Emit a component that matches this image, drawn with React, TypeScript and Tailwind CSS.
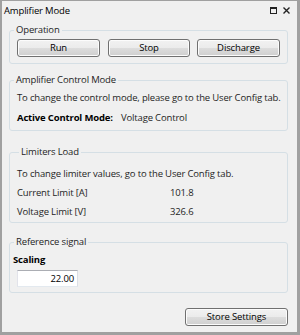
export default function App() {
  const font = { fontFamily: '"Open Sans", "Noto Sans", sans-serif' }

  const btn =
    "h-[18px] flex items-center justify-center rounded-[3px] border border-[#707070] bg-[linear-gradient(#f2f2f2_0%,#ebebeb_50%,#dddddd_50%,#cfcfcf_100%)] shadow-[inset_0_0_0_1px_#fcfcfc] text-[9.5px] tracking-[-0.12px] text-black"

  const group = "ml-[7px] w-[279px] border border-[#d5dfe5] rounded-[3px] px-0"
  const legend = "text-[9.5px] leading-[16px] text-[#1e1e1e] px-[2px]"

  return (
    <div
      className="w-[300px] h-[335px] bg-[#f0f0f0] border-t border-l-2 border-r-[3px] border-b-[3px] border-[#a0a0a0] flex flex-col text-[#1e1e1e] tracking-[-0.16px]"
      style={font}
    >
      {/* Title bar */}
      <div className="h-[21px] flex items-center pl-[2px] pr-[7px] shrink-0">
        <span className="text-[9.5px] text-black">Amplifier Mode</span>
        <div className="ml-auto flex items-center gap-[6px] -mt-[2px]">
          <svg width="7" height="7" viewBox="0 0 7 7">
            <rect x="0.5" y="0.5" width="6" height="6" fill="none" stroke="#222" strokeWidth="1" />
            <rect x="0" y="0" width="7" height="2" fill="#222" />
          </svg>
          <svg width="7" height="7" viewBox="0 0 7 7">
            <path d="M0.5 0.5 L6.5 6.5 M6.5 0.5 L0.5 6.5" stroke="#222" strokeWidth="1.4" />
          </svg>
        </div>
      </div>

      {/* Operation */}
      <fieldset className={`${group} pt-[1px] pb-[6px]`}>
        <legend className={`${legend} ml-[4px]`}>Operation</legend>
        <div className="flex pl-[7px]">
          <button className={`${btn} w-[83px]`}>Run</button>
          <button className={`${btn} w-[82px] ml-[8px]`}>Stop</button>
          <button className={`${btn} w-[83px] ml-[7px]`}>Discharge</button>
        </div>
      </fieldset>

      {/* Amplifier Control Mode */}
      <fieldset className={`${group} mt-[8px] pt-[2px] pb-[4px]`}>
        <legend className={`${legend} ml-[4px]`}>Amplifier Control Mode</legend>
        <div className="pl-[7px] flex flex-col gap-[4px] text-[9.5px] leading-[16px]">
          <div className="whitespace-nowrap">To change the control mode, please go to the User Config tab.</div>
          <div className="flex whitespace-nowrap">
            <span className="font-bold text-black w-[104px]">Active Control Mode:</span>
            <span>Voltage Control</span>
          </div>
        </div>
      </fieldset>

      {/* Limiters Load */}
      <fieldset className={`${group} mt-[13px] pt-[6px] pb-[2px]`}>
        <legend className={`${legend} ml-[9px]`}>Limiters Load</legend>
        <div className="pl-[7px] flex flex-col gap-[3px] text-[9.5px] leading-[16px]">
          <div className="whitespace-nowrap">To change limiter values, go to the User Config tab.</div>
          <div className="flex">
            <span className="w-[153px]">Current Limit [A]</span>
            <span>101.8</span>
          </div>
          <div className="flex">
            <span className="w-[153px]">Voltage Limit [V]</span>
            <span>326.6</span>
          </div>
        </div>
      </fieldset>

      {/* Reference signal */}
      <fieldset className={`${group} mt-[11px] pt-[2px] pb-[5px]`}>
        <legend className={`${legend} ml-[4px]`}>Reference signal</legend>
        <div className="flex flex-col text-[9.5px] leading-[16px]">
          <span className="pl-[3px] font-bold text-black">Scaling</span>
          <div className="ml-[7px] mt-[2px] w-[61px] h-[17px] bg-white border border-t-[#abadb3] border-l-[#e2e3ea] border-r-[#dbdfe6] border-b-[#e3e9ef] flex items-center justify-end pr-[3px] text-black">
            22.00
          </div>
        </div>
      </fieldset>

      {/* Footer */}
      <div className="mt-[15px] flex justify-end mr-[9px]">
        <button className={`${btn} w-[103px] h-[17px]`}>Store Settings</button>
      </div>
    </div>
  )
}
